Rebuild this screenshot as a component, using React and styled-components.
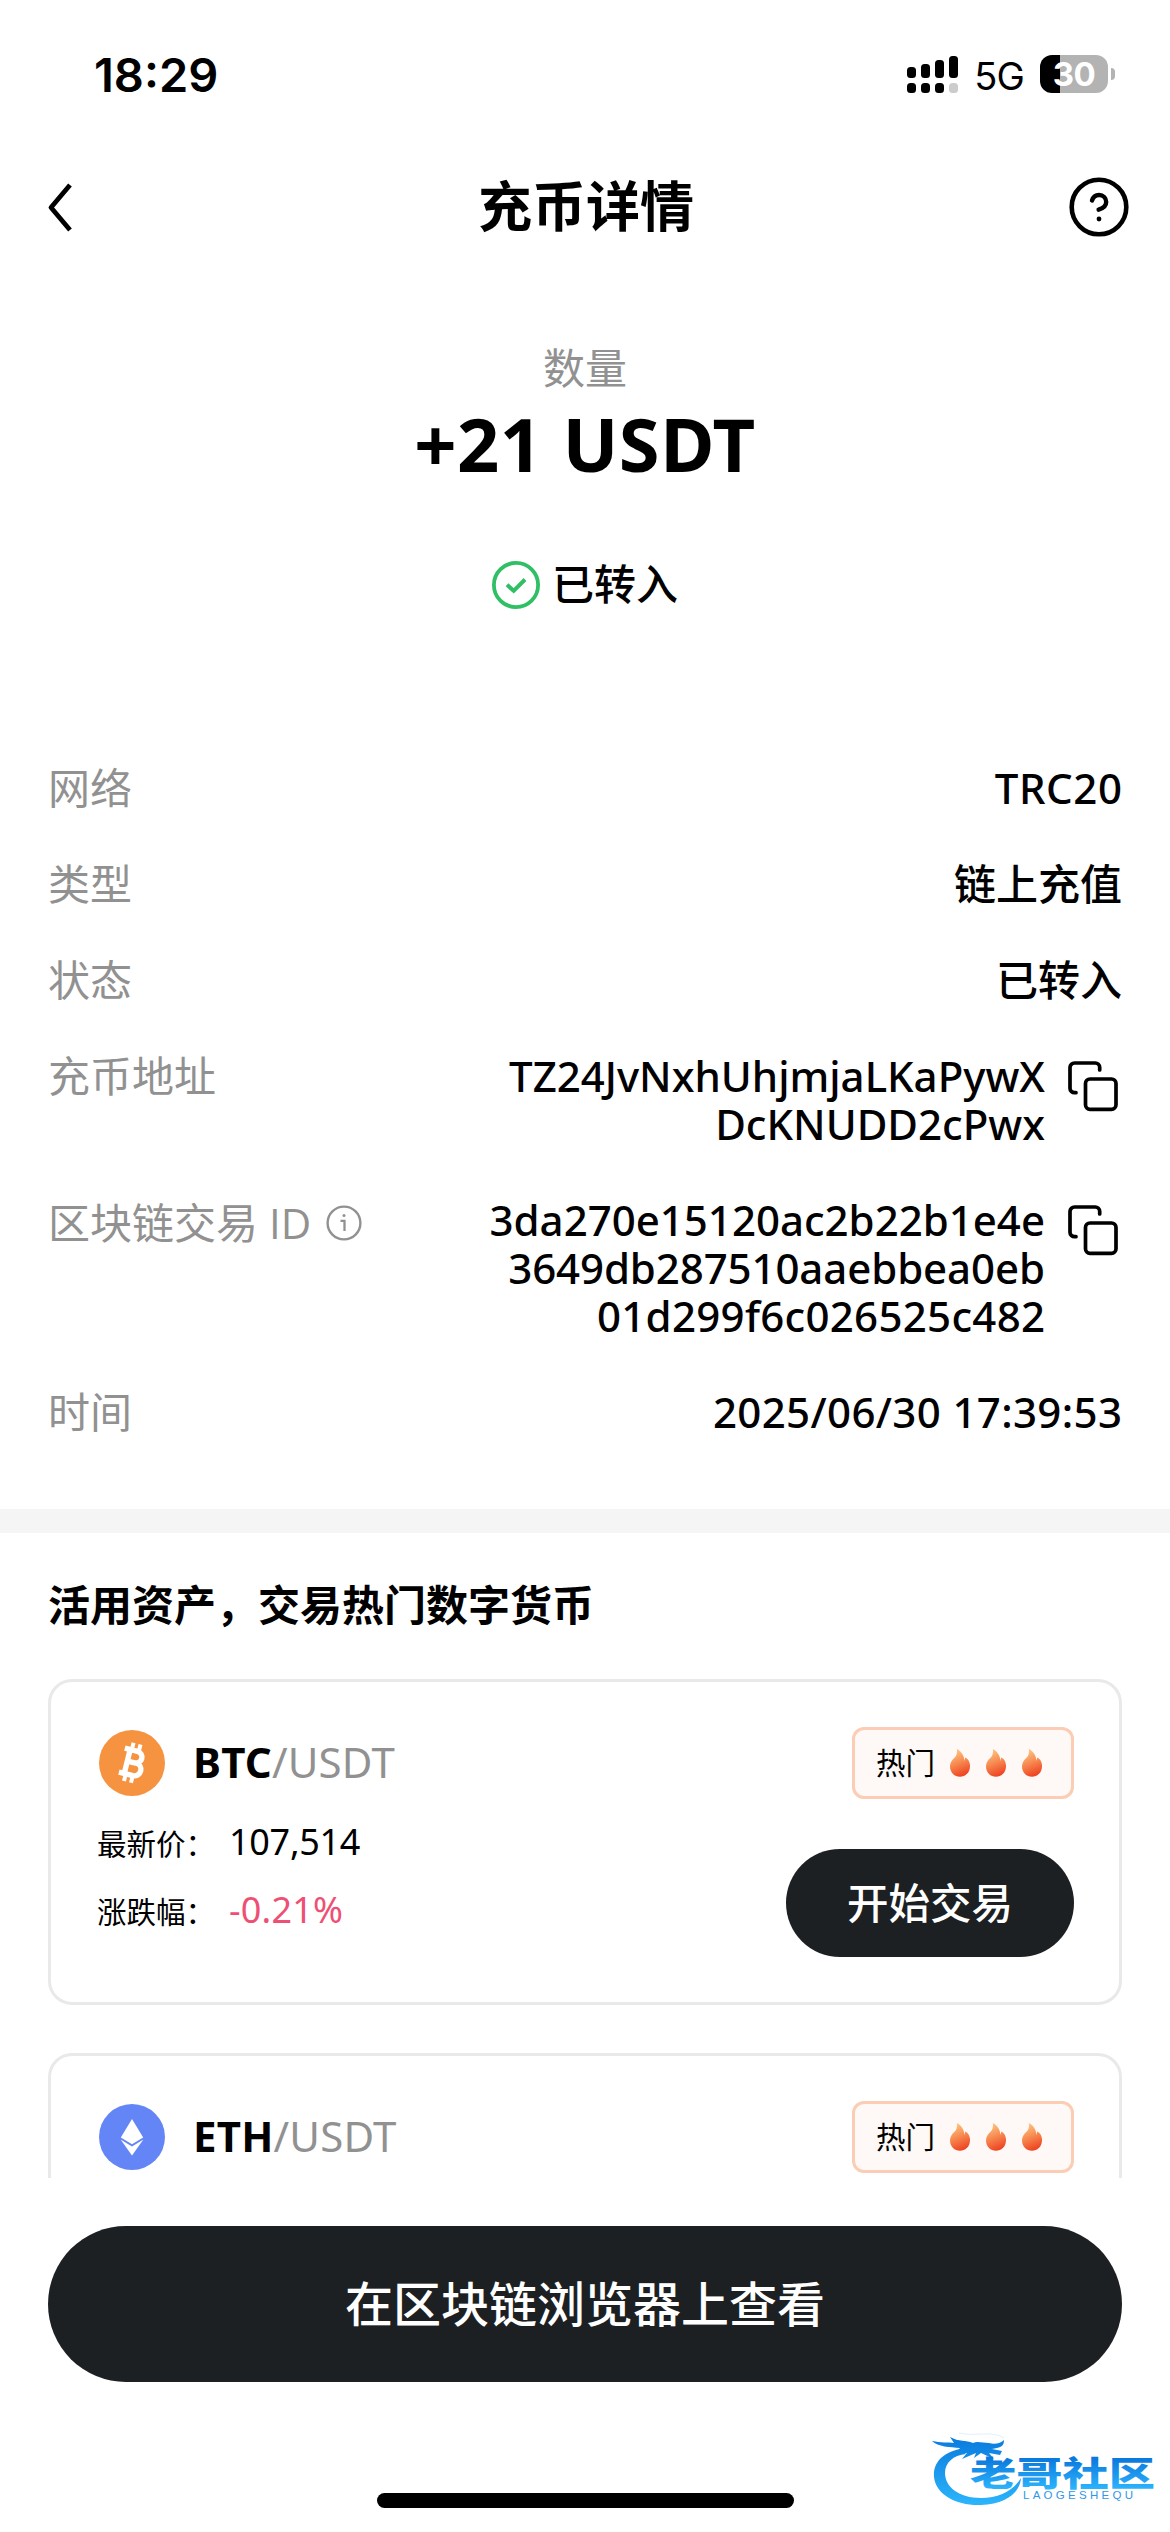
import React from "react";
import styled, { createGlobalStyle } from "styled-components";

const GlobalStyle = createGlobalStyle`
  * {
    box-sizing: border-box;
  }
  body {
    margin: 0;
    background: #ffffff;
    color: #000000;
    font-family: "Noto Sans", "Noto Sans CJK SC", sans-serif;
  }
`;

const Screen = styled.div`
  position: relative;
  display: flex;
  flex-direction: column;
  width: 1170px;
  height: 2532px;
  overflow: hidden;
  background: #ffffff;
`;

const StatusBar = styled.div`
  display: flex;
  flex: none;
  justify-content: space-between;
  align-items: center;
  height: 148px;
  padding: 0 55px 0 94px;
  font-family: Inter, sans-serif;
`;

const Clock = styled.span`
  font-size: 47px;
  font-weight: 600;
`;

const StatusIcons = styled.div`
  display: flex;
  align-items: center;
`;

const NetworkType = styled.span`
  margin: 3px 16px 0 15px;
  font-size: 38px;
  line-height: 46px;
  letter-spacing: -0.8px;
`;

const Battery = styled.div`
  display: flex;
  align-items: center;
  justify-content: center;
  width: 68px;
  height: 38px;
  border-radius: 12px;
  background: linear-gradient(to right, #000000 20px, #b3b3b3 20px);
  color: #ffffff;
  font-size: 33px;
  font-weight: 700;
  line-height: 38px;
  letter-spacing: -0.5px;
`;

const BatteryCap = styled.div`
  width: 4px;
  height: 12px;
  margin-left: 3px;
  border-radius: 0 4px 4px 0;
  background: #b3b3b3;
`;

const NavBar = styled.header`
  display: flex;
  flex: none;
  align-items: center;
  justify-content: space-between;
  height: 118px;
  padding: 0 41px 0 46px;
`;

const Title = styled.h1`
  margin: 0;
  padding: 0 0 3px 27px;
  font-size: 54px;
  font-weight: 600;
  line-height: 64px;
`;

const Summary = styled.section`
  display: flex;
  flex: none;
  flex-direction: column;
  align-items: center;
  height: 498px;
  padding-top: 78px;
`;

const SummaryLabel = styled.div`
  color: #919191;
  font-size: 42px;
  line-height: 48px;
`;

const Amount = styled.div`
  margin-top: 7px;
  font-size: 74px;
  font-weight: 700;
  line-height: 90px;
  letter-spacing: 0.5px;
`;

const Status = styled.div`
  display: flex;
  align-items: center;
  gap: 12px;
  margin-top: 72px;
  font-size: 42px;
  font-weight: 500;
  line-height: 46px;
`;

const StatusText = styled.span`
  padding-bottom: 2px;
`;

const Details = styled.section`
  display: flex;
  flex: none;
  flex-direction: column;
  gap: 48px;
  height: 745px;
  padding: 0 48px;
  font-size: 42px;
  line-height: 48px;
`;

const DetailRow = styled.div`
  display: flex;
  align-items: flex-start;
  justify-content: space-between;
`;

const DetailLabel = styled.div`
  display: flex;
  align-items: center;
  gap: 15px;
  padding-top: ${(p) => (p.$lowered ? "3px" : "0")};
  color: #919191;
  font-family: "Open Sans", "Noto Sans CJK SC", sans-serif;
`;

const DetailValue = styled.div`
  display: flex;
  align-items: flex-start;
  gap: 23px;
  font-weight: 500;
  text-align: right;
`;

const ValueLine = styled.div`
  margin-right: ${(p) => -(p.$spacing || 0)}px;
  letter-spacing: ${(p) => p.$spacing || 0}px;
  white-space: nowrap;
`;

const Divider = styled.div`
  flex: none;
  height: 24px;
  background: #f5f5f5;
`;

const Market = styled.section`
  display: flex;
  flex: none;
  flex-direction: column;
  height: 645px;
  padding: 48px 48px 0;
  overflow: hidden;
`;

const MarketTitle = styled.h2`
  margin: 0 0 50px;
  font-size: 42px;
  font-weight: 600;
  line-height: 48px;
`;

const Card = styled.article`
  flex: none;
  height: 326px;
  margin-bottom: 48px;
  padding: 45px 45px 0 46px;
  border: 3px solid #e9e9e9;
  border-radius: 24px;
`;

const CardTop = styled.div`
  display: flex;
  align-items: center;
  height: 72px;
  padding-left: 2px;
`;

const Pair = styled.div`
  flex: 1;
  margin-left: 28px;
  padding-bottom: 3px;
  color: #919191;
  font-size: 42px;
  line-height: 48px;
  letter-spacing: 0.2px;
`;

const Base = styled.span`
  color: #000000;
  font-weight: 700;
`;

const HotTag = styled.div`
  display: flex;
  align-items: center;
  width: 222px;
  height: 72px;
  padding-left: 21px;
  border: 3px solid #facdb4;
  border-radius: 12px;
  background: #fef8f6;
`;

const HotText = styled.span`
  padding-bottom: 3px;
  font-size: 29.5px;
`;

const Flames = styled.div`
  display: flex;
  gap: 16px;
  margin-left: 15px;
`;

const CardBody = styled.div`
  display: flex;
  justify-content: space-between;
`;

const Quotes = styled.div`
  display: flex;
  flex-direction: column;
  gap: 20px;
  padding-top: 18px;
`;

const Quote = styled.div`
  display: flex;
  align-items: center;
  height: 48px;
`;

const QuoteLabel = styled.span`
  width: 132px;
  padding-top: 3px;
  font-size: 29.5px;
  white-space: nowrap;
`;

const QuoteValue = styled.span`
  color: ${(p) => (p.$down ? "#ee4f74" : "#000000")};
  font-size: 36px;
  letter-spacing: ${(p) => (p.$down ? "0.2px" : "-0.3px")};
`;

const TradeButton = styled.button`
  width: 288px;
  height: 108px;
  margin-top: 50px;
  padding: 0 0 4px;
  border: 0;
  border-radius: 54px;
  background: #1d2023;
  color: #ffffff;
  font: 500 41.5px "Noto Sans CJK SC", sans-serif;
`;

const Footer = styled.footer`
  display: flex;
  flex: 1;
  flex-direction: column;
  align-items: center;
  padding: 48px 48px 0;
`;

const ExplorerButton = styled.button`
  width: 100%;
  height: 156px;
  padding: 0 0 6px;
  border: 0;
  border-radius: 78px;
  background: #1d2023;
  color: #ffffff;
  font: 500 48px "Noto Sans CJK SC", sans-serif;
`;

const HomeIndicator = styled.div`
  width: 417px;
  height: 15px;
  margin-top: 111px;
  border-radius: 8px;
  background: #000000;
`;

const Watermark = styled.svg`
  position: absolute;
  left: 925px;
  top: 2422px;
`;

const SignalIcon = () => (
  <svg width="52" height="38" viewBox="0 0 52 38">
    <rect x="0" y="12" width="9" height="11" rx="3.5" />
    <rect x="14" y="9" width="9" height="14" rx="3.5" />
    <rect x="28" y="5" width="9" height="18" rx="3.5" />
    <rect x="42" y="1" width="9" height="22" rx="3.5" />
    <rect x="0" y="28" width="9" height="10" rx="3.5" />
    <rect x="14" y="28" width="9" height="10" rx="3.5" />
    <rect x="28" y="28" width="9" height="10" rx="3.5" />
    <rect x="42" y="28" width="9" height="10" rx="3.5" fill="#cccccc" />
  </svg>
);

const BackIcon = () => (
  <svg width="30" height="50" viewBox="0 0 30 50" fill="none" stroke="#000" strokeWidth="4.8">
    <path d="M24 3 L5 25.5 L24 48" strokeLinejoin="round" />
  </svg>
);

const HelpIcon = () => (
  <svg width="60" height="60" viewBox="0 0 60 60" fill="none" stroke="#000" strokeLinecap="round">
    <circle cx="30" cy="30" r="27.3" strokeWidth="4.6" />
    <path d="M23 23.5 C24.2 19.8 27 18 30 18 C34.2 18 37.2 21 37.2 25 C37.2 29.5 33.5 31.5 29.6 32.7" strokeWidth="4.4" />
    <circle cx="30" cy="42" r="2.4" fill="#000" stroke="none" />
  </svg>
);

const CheckIcon = () => (
  <svg width="48" height="48" viewBox="0 0 48 48" fill="none" stroke="#31bf66">
    <circle cx="24" cy="24" r="22.1" strokeWidth="3.8" />
    <path d="M15 23.8 L21.7 29.8 L33 18.5" strokeWidth="4" />
  </svg>
);

const InfoIcon = () => (
  <svg width="36" height="36" viewBox="0 0 36 36" fill="none" stroke="#919191">
    <circle cx="18" cy="18" r="16.4" strokeWidth="2.4" />
    <path d="M14.5 15.8 H18.5 V26" strokeWidth="2.3" />
    <circle cx="18" cy="10.6" r="1.5" fill="#919191" stroke="none" />
  </svg>
);

const CopyIcon = () => (
  <svg width="54" height="60" viewBox="0 0 54 60" fill="none" stroke="#000" strokeWidth="3.7" strokeLinecap="round">
    <path d="M8 40.7 H6.5 A4.5 4.5 0 0 1 2 36.2 V15.5 A4.5 4.5 0 0 1 6.5 11 H27.2 A4.5 4.5 0 0 1 31.7 15.5 V18" />
    <rect x="17.5" y="27" width="30.5" height="30.3" rx="4.5" />
  </svg>
);

const Flame = () => (
  <svg width="20" height="28" viewBox="0 0 20 28">
    <defs>
      <linearGradient id="flame" x1="0.3" y1="0" x2="0.6" y2="1">
        <stop offset="0" stopColor="#fdc985" />
        <stop offset="0.5" stopColor="#f78850" />
        <stop offset="1" stopColor="#ed401f" />
      </linearGradient>
    </defs>
    <path
      fill="url(#flame)"
      d="M6.8 0 C11 2 14.2 6.5 14.4 12 C14.8 10.5 15 9.2 15.4 8.4 C18.5 10 20.3 13.5 20 17.8 C19.6 24 15.2 27.8 10 27.8 C4.5 27.8 0.2 23.8 0 17.8 C-0.1 13.8 1.8 11.4 4 9.2 C6.2 7 7.6 4.5 6.8 0 Z"
    />
  </svg>
);

const BtcIcon = () => (
  <svg width="66" height="66" viewBox="0 0 66 66">
    <circle cx="33" cy="33" r="33" fill="#f59340" />
    <g transform="translate(33 33) rotate(14)" fill="none" stroke="#fff">
      <path d="M-10.5 -12.6 H2.5 A5.8 5.8 0 0 1 2.5 -0.8 H-5 M2.5 -0.8 H4 A6.4 6.4 0 0 1 4 12 H-10.5 M-5 -13 V12.5" strokeWidth="5.4" />
      <path d="M-3.4 -20 V-13 M3.8 -20 V-13 M-3.4 12 V19.5 M3.8 12 V19.5" strokeWidth="4" />
    </g>
  </svg>
);

const EthIcon = () => (
  <svg width="66" height="66" viewBox="0 0 66 66">
    <circle cx="33" cy="33" r="33" fill="#6385f6" />
    <path d="M33 15 L44.2 33.6 L33 40.2 L21.8 33.6 Z M21.6 35.6 L33 42.4 L44.4 35.6 L33 51.6 Z" fill="#fff" />
  </svg>
);

const CommunityMark = () => (
  <Watermark width="240" height="90" viewBox="0 0 240 90">
    <defs>
      <linearGradient id="mark" gradientUnits="userSpaceOnUse" x1="0" y1="20" x2="0" y2="84">
        <stop offset="0" stopColor="#0c7fe0" />
        <stop offset="1" stopColor="#2cb6fc" />
      </linearGradient>
      <linearGradient id="markText" gradientUnits="userSpaceOnUse" x1="0" y1="36" x2="0" y2="67">
        <stop offset="0" stopColor="#0a78dc" />
        <stop offset="1" stopColor="#2cb4fd" />
      </linearGradient>
    </defs>
    <path
      fill="url(#mark)"
      d="M35 27 C16 31 8 42 9 55 C11 73 32 84 56 83 C80 82 95 71 96 56 C88 69 74 76 56 76 C34 76 20 65 20 51 C20 41 28 33 41 32 Z"
    />
    <path
      fill="url(#mark)"
      d="M7 19 C16 21 23 20 29 21 L25 15 C34 20 41 18 48 21 C52 19 58 21 64 21 C70 23 76 21 79 18 C79 23 77 25 72 26 L67 27 L77 29 L75 33 L64 31 L69 37 L56 31 L49 36 L51 31 L37 37 L42 31 L30 32 L35 26 C25 25 13 25 7 19 Z"
    />
    <path d="M34 11 C48 15 68 8 79 16" fill="none" stroke="#e3f0fb" strokeWidth="1" />
    <text
      x="45"
      y="63.5"
      fill="url(#markText)"
      fontFamily="Noto Sans CJK SC"
      fontSize="34"
      fontWeight="900"
      textLength="185"
      lengthAdjust="spacingAndGlyphs"
    >
      老哥社区
    </text>
    <text x="98" y="76.5" fill="#2f97ea" fontFamily="Liberation Sans" fontSize="11.5" textLength="110">
      LAOGESHEQU
    </text>
  </Watermark>
);

const coins = [
  { base: "BTC", icon: BtcIcon, price: "107,514", change: "-0.21%", down: true },
  { base: "ETH", icon: EthIcon },
];

function CoinCard({ coin }) {
  const Icon = coin.icon;
  return (
    <Card>
      <CardTop>
        <Icon />
        <Pair>
          <Base>{coin.base}</Base>/USDT
        </Pair>
        <HotTag>
          <HotText>热门</HotText>
          <Flames>
            <Flame />
            <Flame />
            <Flame />
          </Flames>
        </HotTag>
      </CardTop>
      {coin.price && (
        <CardBody>
          <Quotes>
            <Quote>
              <QuoteLabel>最新价：</QuoteLabel>
              <QuoteValue>{coin.price}</QuoteValue>
            </Quote>
            <Quote>
              <QuoteLabel>涨跌幅：</QuoteLabel>
              <QuoteValue $down={coin.down}>{coin.change}</QuoteValue>
            </Quote>
          </Quotes>
          <TradeButton>开始交易</TradeButton>
        </CardBody>
      )}
    </Card>
  );
}

function App() {
  return (
    <Screen>
      <GlobalStyle />
      <StatusBar>
        <Clock>18:29</Clock>
        <StatusIcons>
          <SignalIcon />
          <NetworkType>5G</NetworkType>
          <Battery>30</Battery>
          <BatteryCap />
        </StatusIcons>
      </StatusBar>
      <NavBar>
        <BackIcon />
        <Title>充币详情</Title>
        <HelpIcon />
      </NavBar>
      <Summary>
        <SummaryLabel>数量</SummaryLabel>
        <Amount>+21 USDT</Amount>
        <Status>
          <CheckIcon />
          <StatusText>已转入</StatusText>
        </Status>
      </Summary>
      <Details>
        <DetailRow>
          <DetailLabel>网络</DetailLabel>
          <DetailValue>
            <ValueLine $spacing={0.6}>TRC20</ValueLine>
          </DetailValue>
        </DetailRow>
        <DetailRow>
          <DetailLabel>类型</DetailLabel>
          <DetailValue>链上充值</DetailValue>
        </DetailRow>
        <DetailRow>
          <DetailLabel>状态</DetailLabel>
          <DetailValue>已转入</DetailValue>
        </DetailRow>
        <DetailRow>
          <DetailLabel>充币地址</DetailLabel>
          <DetailValue>
            <div>
              <ValueLine>TZ24JvNxhUhjmjaLKaPywX</ValueLine>
              <ValueLine>DcKNUDD2cPwx</ValueLine>
            </div>
            <CopyIcon />
          </DetailValue>
        </DetailRow>
        <DetailRow>
          <DetailLabel $lowered>
            区块链交易 ID
            <InfoIcon />
          </DetailLabel>
          <DetailValue>
            <div>
              <ValueLine>3da270e15120ac2b22b1e4e</ValueLine>
              <ValueLine $spacing={-0.1}>3649db287510aaebbea0eb</ValueLine>
              <ValueLine $spacing={0.3}>01d299f6c026525c482</ValueLine>
            </div>
            <CopyIcon />
          </DetailValue>
        </DetailRow>
        <DetailRow>
          <DetailLabel>时间</DetailLabel>
          <DetailValue>
            <ValueLine $spacing={0.37}>2025/06/30 17:39:53</ValueLine>
          </DetailValue>
        </DetailRow>
      </Details>
      <Divider />
      <Market>
        <MarketTitle>活用资产，交易热门数字货币</MarketTitle>
        {coins.map((coin) => (
          <CoinCard key={coin.base} coin={coin} />
        ))}
      </Market>
      <Footer>
        <ExplorerButton>在区块链浏览器上查看</ExplorerButton>
        <HomeIndicator />
      </Footer>
      <CommunityMark />
    </Screen>
  );
}

export default App;
